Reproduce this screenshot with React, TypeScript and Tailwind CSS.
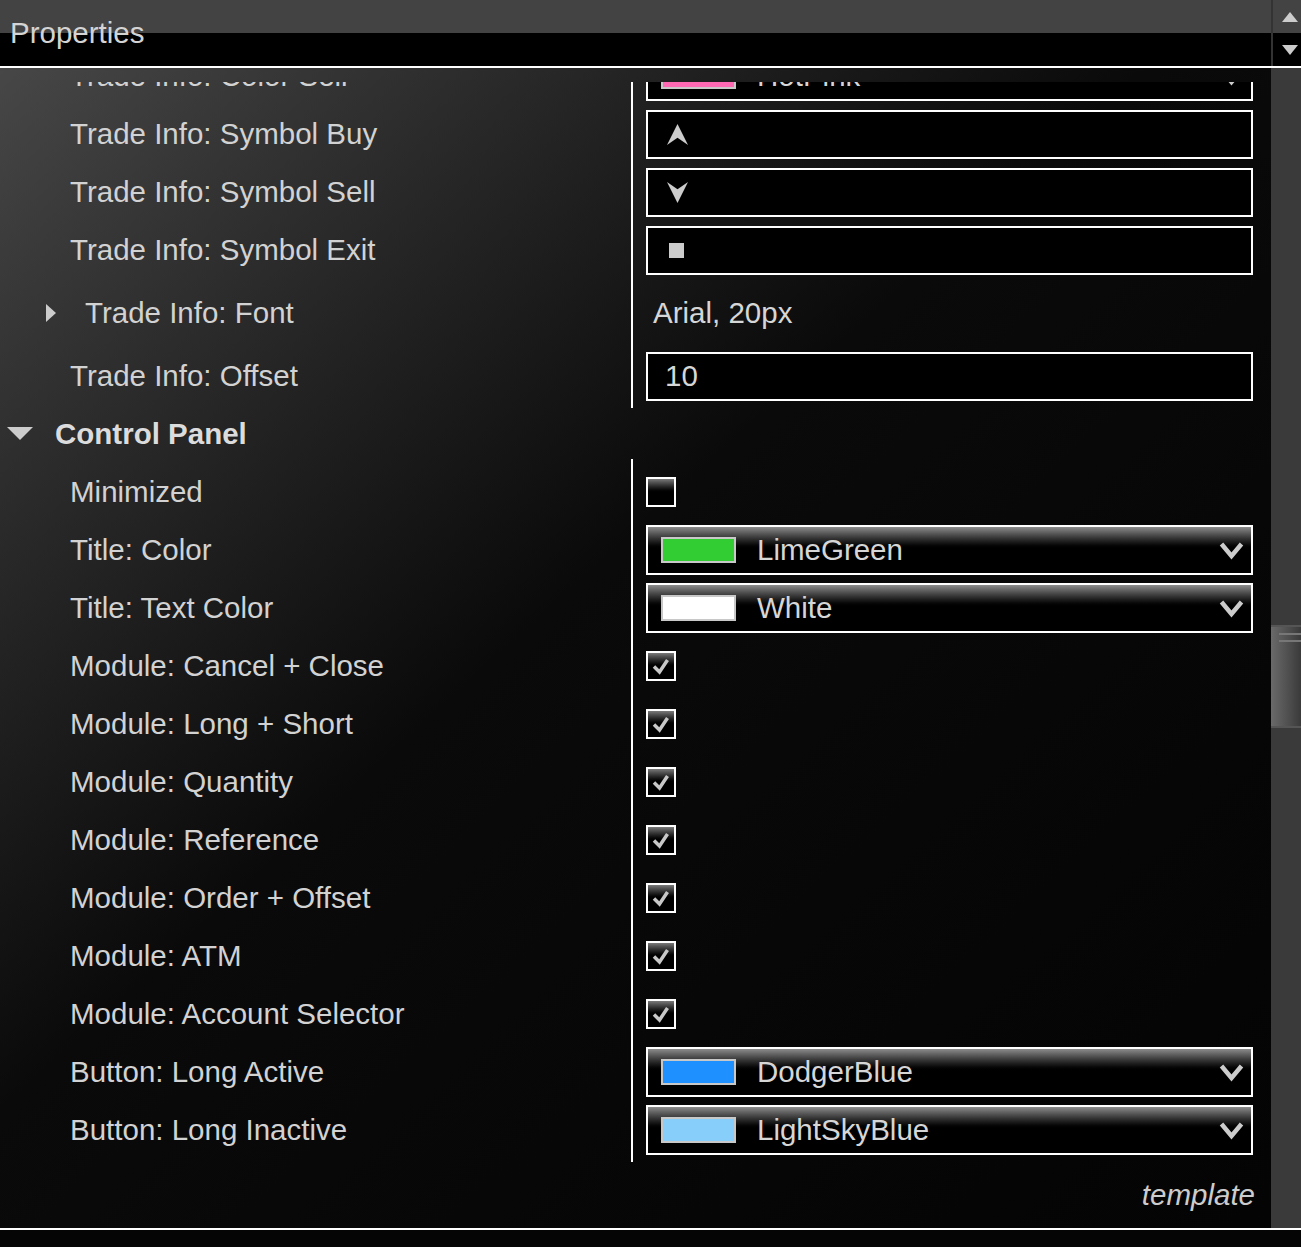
import React from "react";

type Kind = "color" | "symbol" | "font" | "input" | "check";

type Item = {
  label: string;
  kind: Kind;
  swatch?: string;
  name?: string;
  glyph?: "up" | "down" | "square";
  value?: string;
  checked?: boolean;
  expandable?: boolean;
};

const tradeInfo: Item[] = [
  { label: "Trade Info: Color Sell", kind: "color", swatch: "#ff69b4", name: "HotPink" },
  { label: "Trade Info: Symbol Buy", kind: "symbol", glyph: "up" },
  { label: "Trade Info: Symbol Sell", kind: "symbol", glyph: "down" },
  { label: "Trade Info: Symbol Exit", kind: "symbol", glyph: "square" },
  { label: "Trade Info: Font", kind: "font", value: "Arial, 20px", expandable: true },
  { label: "Trade Info: Offset", kind: "input", value: "10" },
];

const controlPanel: Item[] = [
  { label: "Minimized", kind: "check", checked: false },
  { label: "Title: Color", kind: "color", swatch: "#32cd32", name: "LimeGreen" },
  { label: "Title: Text Color", kind: "color", swatch: "#ffffff", name: "White" },
  { label: "Module: Cancel + Close", kind: "check", checked: true },
  { label: "Module: Long + Short", kind: "check", checked: true },
  { label: "Module: Quantity", kind: "check", checked: true },
  { label: "Module: Reference", kind: "check", checked: true },
  { label: "Module: Order + Offset", kind: "check", checked: true },
  { label: "Module: ATM", kind: "check", checked: true },
  { label: "Module: Account Selector", kind: "check", checked: true },
  { label: "Button: Long Active", kind: "color", swatch: "#1e90ff", name: "DodgerBlue" },
  { label: "Button: Long Inactive", kind: "color", swatch: "#87cefa", name: "LightSkyBlue" },
];

function Glyph({ type }: { type: "up" | "down" | "square" }) {
  if (type === "square") return <div className="w-[15px] h-[15px] bg-[#cccccc] ml-[21px]" />;
  return (
    <svg width="21" height="21" viewBox="0 0 20 20" className="ml-[19px]">
      {type === "up" ? (
        <path d="M10 0 L20 20 L10 13 L0 20 Z" fill="#cccccc" />
      ) : (
        <path d="M0 0 L10 7 L20 0 L10 20 Z" fill="#cccccc" />
      )}
    </svg>
  );
}

function Chevron() {
  return (
    <svg width="25" height="19" viewBox="0 0 25 19" className="ml-auto mr-[7px]">
      <path d="M2.5 3 L12.5 15 L22.5 3" fill="none" stroke="#cccccc" strokeWidth="4.5" strokeLinejoin="miter" />
    </svg>
  );
}

function Value({ item }: { item: Item }) {
  if (item.kind === "font") {
    return <span className="pl-[7px] text-[#d6d6d6]">{item.value}</span>;
  }
  if (item.kind === "check") {
    return (
      <div className="w-[30px] h-[30px] border-2 border-white bg-linear-to-b from-[#7a7a7a] to-black to-[55%]">
        {item.checked && (
          <svg width="26" height="26" viewBox="0 0 26 26">
            <path d="M6 13.5 L11.5 19 L19.5 7" fill="none" stroke="#c8c8c8" strokeWidth="3.5" />
          </svg>
        )}
      </div>
    );
  }
  if (item.kind === "color") {
    return (
      <div className="h-[50px] w-full border-2 border-white flex items-center bg-linear-to-b from-[#8c8c8c] to-black to-[50%]">
        <div className="ml-[13px] w-[75px] h-[26px] border-2 border-[#c8c8c8]" style={{ backgroundColor: item.swatch }} />
        <span className="ml-[21px] text-[#d6d6d6]">{item.name}</span>
        <Chevron />
      </div>
    );
  }
  if (item.kind === "input") {
    return (
      <div className="h-[49px] w-full border-2 border-white bg-black flex items-center">
        <span className="pl-[17px] text-[#d6d6d6]">{item.value}</span>
      </div>
    );
  }
  return (
    <div className="h-[49px] w-full border-2 border-white bg-black flex items-center">
      <Glyph type={item.glyph!} />
    </div>
  );
}

function Group({ items }: { items: Item[] }) {
  const rowH = (it: Item) => (it.kind === "font" ? "h-[68px]" : "h-[58px]");
  return (
    <div className="flex">
      <div className="w-[631px] flex flex-col pt-1 pb-[3px]">
        {items.map((it) => (
          <div key={it.label} className={`${rowH(it)} flex items-center`}>
            {it.expandable ? (
              <>
                <svg width="10" height="18" viewBox="0 0 10 18" className="ml-[46px]">
                  <path d="M0 0 L10 9 L0 18 Z" fill="#cccccc" />
                </svg>
                <span className="ml-[29px] text-[#d2d2d2]">{it.label}</span>
              </>
            ) : (
              <span className="pl-[70px] text-[#d2d2d2]">{it.label}</span>
            )}
          </div>
        ))}
      </div>
      <div className="flex-1 flex flex-col pt-1 pb-[3px] border-l-2 border-white pl-[13px] pr-[18px]">
        {items.map((it) => (
          <div key={it.label} className={`${rowH(it)} flex items-center`}>
            <Value item={it} />
          </div>
        ))}
      </div>
    </div>
  );
}

export default function App() {
  return (
    <div className="w-[1301px] h-[1247px] flex flex-col bg-[#050505] overflow-hidden text-[29.5px] leading-none font-['Liberation_Sans',Arial,sans-serif]">
      {/* title bar */}
      <div className="h-[68px] flex border-b-2 border-white shrink-0">
        <div className="flex-1 flex items-center pl-[10px] bg-[linear-gradient(to_bottom,#434343_50%,#000000_50%)]">
          <span className="text-[#d4d4d4]">Properties</span>
        </div>
        <div className="w-[30px] flex flex-col border-l-2 border-[#333333]">
          <div className="h-[33px] bg-[#434343] flex items-center justify-end pr-[3px]">
            <svg width="16" height="10" viewBox="0 0 16 10">
              <path d="M8 0 L16 10 L0 10 Z" fill="#cccccc" />
            </svg>
          </div>
          <div className="flex-1 bg-black flex items-center justify-end pr-[3px]">
            <svg width="16" height="10" viewBox="0 0 16 10">
              <path d="M0 0 L16 0 L8 10 Z" fill="#cccccc" />
            </svg>
          </div>
        </div>
      </div>

      {/* body */}
      <div className="h-[1160px] flex shrink-0">
        <div className="flex-1 flex flex-col bg-linear-to-br from-[#474747] via-[#0a0a0a] via-[45%] to-[#040404]">
          <div className="mt-[14px] flex-1 overflow-hidden">
            <div className="mt-[-39px]">
              <Group items={tradeInfo} />
              <div className="h-[51px] flex items-center">
                <svg width="26" height="13" viewBox="0 0 26 13" className="ml-[7px]">
                  <path d="M0 0 L26 0 L13 13 Z" fill="#cccccc" />
                </svg>
                <span className="ml-[22px] font-bold text-[#dcdcdc]">Control Panel</span>
              </div>
              <Group items={controlPanel} />
              <div className="h-[66px] flex items-center justify-end pr-[16px]">
                <span className="italic text-[#cccccc]">template</span>
              </div>
            </div>
          </div>
        </div>
        <div className="w-[30px] bg-[#3a3a3a] flex flex-col">
          <div className="mt-[557px] h-[103px] border-y-2 border-[#555555] bg-linear-to-r from-[#6a6a6a] via-[#4e4e4e] via-[60%] to-[#3a3a3a] flex flex-col pl-[8px] pt-[6px] gap-[5px]">
            <div className="h-[2px] bg-[#777777]" />
            <div className="h-[2px] bg-[#777777]" />
          </div>
        </div>
      </div>

      {/* footer */}
      <div className="flex-1 border-t-2 border-white bg-[#050505]" />
    </div>
  );
}
